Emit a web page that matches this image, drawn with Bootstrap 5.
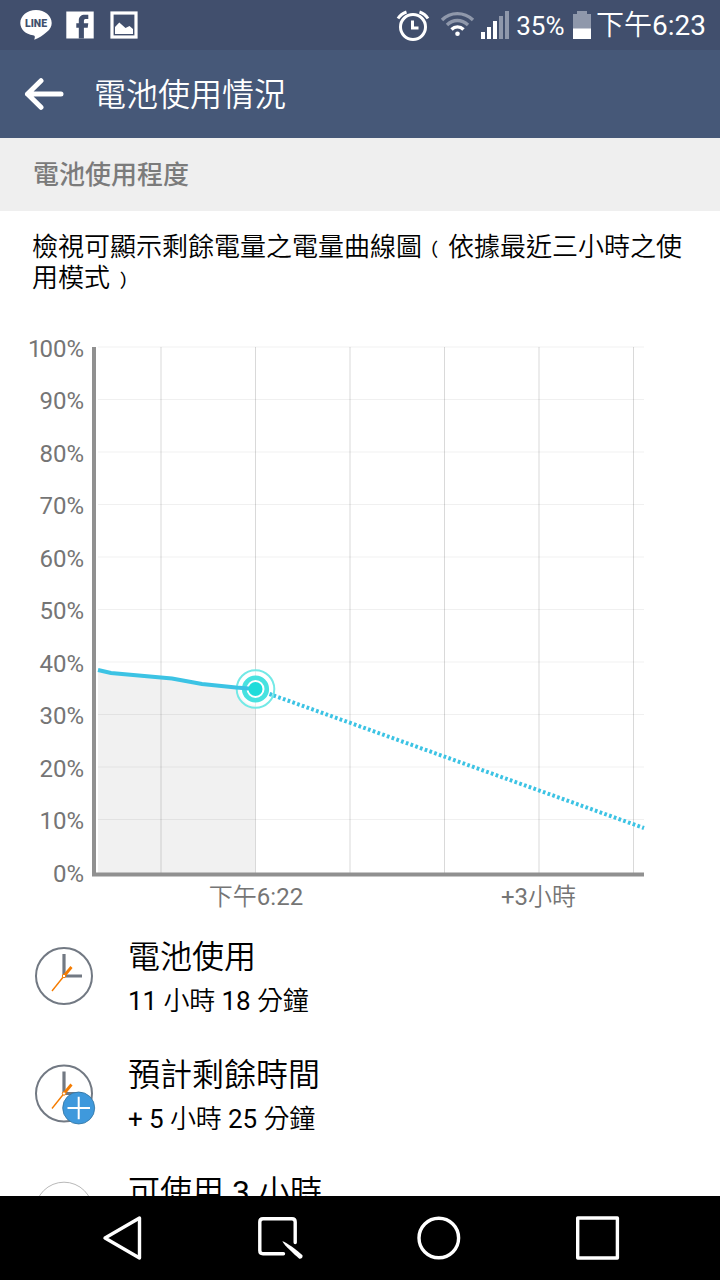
<!DOCTYPE html>
<html lang="zh-Hant">
<head>
<meta charset="utf-8">
<meta name="viewport" content="width=device-width, initial-scale=1">
<title>電池使用情況</title>
<link href="https://cdn.jsdelivr.net/npm/bootstrap@5.3.0/dist/css/bootstrap.min.css" rel="stylesheet">
<style>
  body { font-family: Roboto, "Noto Sans CJK TC", sans-serif; color: #000; background: #fff; height: 1280px; }
  svg { display: block; flex: none; }
  .thin-han { font-weight: 350; }
  .status-bar { height: 50px; background: #414f6d; color: #fff; font-size: 28px; line-height: 50px; padding: 0 14px 0 20px; }
  .status-percent { font-size: 26px; padding-top: 2px; }
  .status-time { padding-top: 2px; }
  .app-bar { height: 88px; background: #465878; color: #fff; padding: 0 24px; gap: 30px; }
  .app-title { font-size: 32px; line-height: 40px; font-weight: 350; padding-top: 2px; }
  .section-head { height: 73px; background: #efefef; color: #7b7b7b; font-size: 26px; line-height: 73px; padding: 1px 33px 0; font-weight: 500; }
  .intro { font-size: 26px; line-height: 31px; padding: 21px 32px 0; height: 118px; font-weight: 350; }
  .usage-chart { height: 588px; }
  .usage-chart text { font-size: 24px; fill: #757575; }
  .info-row { height: 117.5px; padding-left: 34px; gap: 32px; }
  .info-icon { padding-top: 29px; }
  .info-title { font-size: 32px; line-height: 40px; padding-top: 20px; }
  .info-sub { font-size: 26px; line-height: 32px; padding-top: 8px; letter-spacing: -.1px; }
  .nav-keys { height: 84px; background: #000; }
</style>
</head>
<body class="d-flex flex-column overflow-hidden">
  <header>
    <div class="status-bar d-flex align-items-center justify-content-between">
      <div class="d-flex align-items-center">
        <svg width="120" height="50" viewBox="20 0 120 50">
          <path d="M36 10C27.200 10 20.300 15.700 20.300 23C20.300 29.300 25.800 34.400 33 35.200C35.500 35.700 35 37 34.300 39.800C39 38 43 35.500 47 31.800C50 29.400 51.700 26.500 51.700 23C51.700 15.700 44.800 10 36 10Z" fill="#fff"/>
          <text x="36" y="26.900" text-anchor="middle" font-size="11" font-weight="900" fill="#414f6d" textLength="22" lengthAdjust="spacingAndGlyphs">LINE</text>
          <path d="M66.300 11.500H93.700V38.500H66.300Z" fill="#fff"/>
          <path d="M78.800 38.500V27.700H76.300V23.300H78.800V20.500C78.800 16.700 81.200 14.800 84.800 14.800H88.300V19H86C84.500 19 83.900 19.600 83.900 21V23.300H88.300L87.700 27.700H83.900V38.500Z" fill="#414f6d"/>
          <rect x="112" y="13" width="24" height="24" fill="none" stroke="#fff" stroke-width="3.200"/>
          <path d="M115 34V27L119.300 22.500L125.500 28L129.500 26L133 29V34Z" fill="#fff"/>
        </svg>
      </div>
      <div class="d-flex align-items-center">
        <svg width="120" height="50" viewBox="396 0 120 50">
          <g fill="none" stroke="#fff" stroke-width="3">
            <circle cx="413" cy="27" r="12.500"/>
            <path d="M412.500 20.500V28H418.500"/>
            <path d="M398 18.500Q401 13.800 406.500 12M428 18.500Q425 13.800 419.500 12"/>
          </g>
          <g fill="none" stroke="#8f98ab" stroke-width="3.400">
            <path d="M442 20C450.500 11.500 464 11.500 473 20"/>
            <path d="M447 25C453 19 461.500 19 468 25"/>
          </g>
          <path d="M451.500 29.500C455 26 460 26 463.500 29.500" fill="none" stroke="#fff" stroke-width="3.400"/>
          <circle cx="457.500" cy="33.700" r="2.300" fill="#fff"/>
          <path d="M481 32H485V39H481ZM487 27H491V39H487ZM493 21H497V39H493Z" fill="#fff"/>
          <path d="M499 16H503V39H499ZM505 11H509V39H505Z" fill="#8f98ab"/>
        </svg>
        <span class="status-percent">35%</span>
        <svg width="31.500" height="50" viewBox="565 0 31.500 50">
          <path d="M574 14H578V11H588V14H592V29H574Z" fill="#8f98ab"/>
          <path d="M574 28.500H592V39H574Z" fill="#fff"/>
        </svg>
        <span class="status-time"><span class="thin-han">下午</span>6:23</span>
      </div>
    </div>
    <div class="app-bar d-flex align-items-center">
      <svg width="40" height="32" viewBox="24 78 40 32" fill="none" stroke="#fff" stroke-width="5" stroke-linecap="round" stroke-linejoin="round">
        <path d="M41 80.700L27.500 94L41 107.300M27.500 94H61"/>
      </svg>
      <h1 class="app-title m-0">電池使用情況</h1>
    </div>
  </header>

  <main class="flex-grow-1 overflow-hidden" style="min-height:0">
    <h2 class="section-head m-0">電池使用程度</h2>
    <p class="intro m-0">檢視可顯示剩餘電量之電量曲線圖﹙依據最近三小時之使<br>用模式﹚</p>

    <svg class="usage-chart" width="720" height="588" viewBox="0 329 720 588">
      <path d="M98 670L111 673L172 678.500L202 684L236 687.500L255 689V873H98Z" fill="#f1f1f1"/>
      <path d="M98 347H644M98 399.500H644M98 452H644M98 504.500H644M98 557H644M98 609.500H644M98 662H644M98 714.500H644M98 767H644M98 819.500H644" stroke="#000" stroke-opacity=".06"/>
      <path d="M161 347V873M255.500 347V873M350 347V873M444.500 347V873M539 347V873M633.500 347V873" stroke="#000" stroke-opacity=".15"/>
      <path d="M92 347H96V872.500H644V876.500H92Z" fill="#909090"/>
      <path d="M255.500 689L644 828" fill="none" stroke="#3cc3e4" stroke-width="4" stroke-dasharray="2.700 2.320" stroke-dashoffset="1"/>
      <circle cx="255.500" cy="689" r="16" fill="#fff"/>
      <path d="M255.500 670V708" stroke="#d9d9d9"/>
      <circle cx="255.500" cy="689" r="18.800" fill="#fff" fill-opacity=".5" stroke="#73e9e6" stroke-width="2"/>
      <circle cx="255.500" cy="689" r="11.300" fill="#fff" stroke="#48e2e0" stroke-width="4.600"/>
      <path d="M98 670L111 673L172 678.500L202 684L236 687.500L255 689" fill="none" stroke="#3cc3e4" stroke-width="4"/>
      <path d="M269.500 694L275 696" stroke="#3cc3e4" stroke-width="4" stroke-dasharray="2.700 2.320"/>
      <circle cx="255.500" cy="689" r="7" fill="#1edcda"/>
      <g text-anchor="end">
        <text x="84" y="356.500"><tspan letter-spacing="-2">1</tspan>00%</text>
        <text x="84" y="409">90%</text>
        <text x="84" y="461.500">80%</text>
        <text x="84" y="514">70%</text>
        <text x="84" y="566.500">60%</text>
        <text x="84" y="619">50%</text>
        <text x="84" y="671.500">40%</text>
        <text x="84" y="724">30%</text>
        <text x="84" y="776.500">20%</text>
        <text x="84" y="829">10%</text>
        <text x="84" y="881.500">0%</text>
      </g>
      <g text-anchor="middle">
        <text x="256" y="904.500"><tspan class="thin-han">下午</tspan>6:22</text>
        <text x="538.500" y="904.500">+3<tspan class="thin-han">小時</tspan></text>
      </g>
    </svg>

    <div class="info-row d-flex">
      <div class="info-icon">
        <svg width="62" height="62" viewBox="34 946 62 62" fill="none">
          <circle cx="64" cy="976" r="28" fill="#fff" stroke="#727983" stroke-width="2"/>
          <path d="M64 954V976H82" stroke="#727983" stroke-width="3.200"/>
          <path d="M64 976L52 991" stroke="#f57c00" stroke-width="1.400"/>
          <path d="M64 976L71.500 967" stroke="#f57c00" stroke-width="2.800"/>
          <circle cx="64" cy="976" r="1.700" fill="#fff" stroke="#f57c00"/>
        </svg>
      </div>
      <div>
        <div class="info-title thin-han">電池使用</div>
        <div class="info-sub">11 <span class="thin-han">小時</span> 18 <span class="thin-han">分鐘</span></div>
      </div>
    </div>
    <div class="info-row d-flex">
      <div class="info-icon">
        <svg width="62" height="62" viewBox="34 946.500 62 62" fill="none">
          <circle cx="64" cy="976" r="28" fill="#fff" stroke="#727983" stroke-width="2"/>
          <path d="M64 954V976H82" stroke="#727983" stroke-width="3.200"/>
          <path d="M64 976L52 991" stroke="#f57c00" stroke-width="1.400"/>
          <path d="M64 976L71.500 967" stroke="#f57c00" stroke-width="2.800"/>
          <circle cx="64" cy="976" r="1.700" fill="#fff" stroke="#f57c00"/>
          <circle cx="78.700" cy="990.500" r="16" fill="#3f99dc" stroke="#32749f" stroke-width=".8"/>
          <path d="M67.500 990.500H90M78.700 979.300V1001.700" stroke="#fff" stroke-width="2"/>
        </svg>
      </div>
      <div>
        <div class="info-title thin-han">預計剩餘時間</div>
        <div class="info-sub">+ 5 <span class="thin-han">小時</span> 25 <span class="thin-han">分鐘</span></div>
      </div>
    </div>
    <div class="info-row d-flex">
      <div class="info-icon">
        <svg width="62" height="62" viewBox="34 946 62 62" fill="none">
          <circle cx="64" cy="976" r="28.800" stroke="#b0b0b0" stroke-width=".9"/>
        </svg>
      </div>
      <div class="info-title"><span class="thin-han">可使用</span> 3 <span class="thin-han">小時</span></div>
    </div>
  </main>

  <nav class="nav-keys flex-shrink-0">
    <svg width="720" height="84" viewBox="0 1196 720 84" fill="none" stroke="#fff" stroke-width="3.400" stroke-linejoin="round">
      <path d="M139.500 1218V1258L105 1238Z"/>
      <path d="M295.200 1242.500V1222Q295.200 1218.800 292 1218.800H263Q259.800 1218.800 259.800 1222V1250.500Q259.800 1253.700 263 1253.700H283.500" stroke-linecap="round"/>
      <path d="M282.300 1241.200C286 1242 297 1250 302.500 1255.200C303 1257.500 301.500 1259 299.300 1258.700C294 1254 284.500 1245.500 282.300 1241.200Z" fill="#fff" stroke="none"/>
      <circle cx="438.800" cy="1238" r="19.800"/>
      <rect x="577.700" y="1218" width="39.700" height="40"/>
    </svg>
  </nav>
  <script src="https://cdn.jsdelivr.net/npm/bootstrap@5.3.0/dist/js/bootstrap.bundle.min.js"></script>
</body>
</html>
